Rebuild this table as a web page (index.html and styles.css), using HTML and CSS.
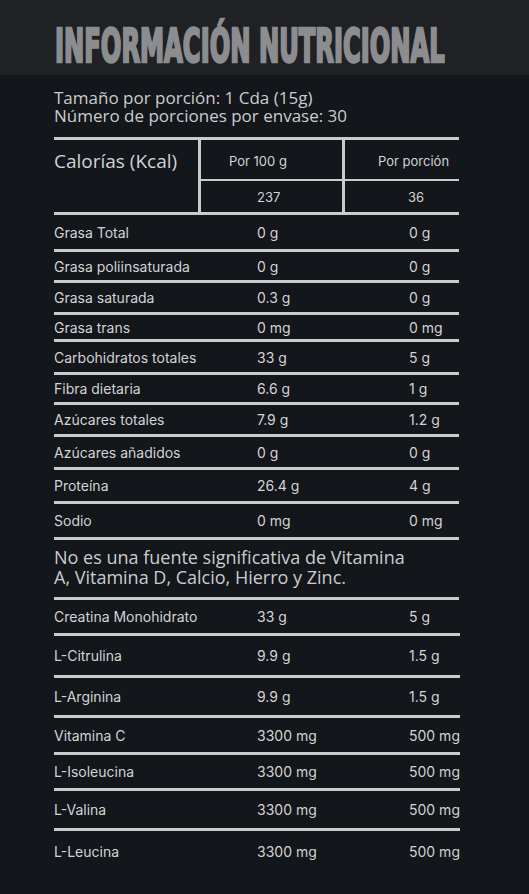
FILE: index.html
```html
<!DOCTYPE html>
<html lang="es">
<head>
    <meta charset="UTF-8">
    <title>Información nutricional</title>
    <meta name="viewport" content="width=device-width, initial-scale=1.0">
    <link rel="stylesheet" href="styles.css">
</head>
<body>
<header class="top">
    <h1 class="title">INFORMACIÓN NUTRICIONAL</h1>
</header>
<main class="panel">
    <p class="serving">Tamaño por porción: 1 Cda (15g)<br>Número de porciones por envase: 30</p>

    <!-- Calorias -->
    <div class="cal">
        <div class="cal-label">Calorías (Kcal)</div>
        <div class="cal-head cal-head-100">Por 100 g</div>
        <div class="cal-head cal-head-por">Por porción</div>
        <div class="cal-val cal-val-100">237</div>
        <div class="cal-val cal-val-por">36</div>
    </div>

    <div class="rows rows-a">
        <div class="row"><span>Grasa Total</span><span>0 g</span><span>0 g</span></div>
        <div class="row"><span>Grasa poliinsaturada</span><span>0 g</span><span>0 g</span></div>
        <div class="row"><span>Grasa saturada</span><span>0.3 g</span><span>0 g</span></div>
        <div class="row"><span>Grasa trans</span><span>0 mg</span><span>0 mg</span></div>
        <div class="row"><span>Carbohidratos totales</span><span>33 g</span><span>5 g</span></div>
        <div class="row"><span>Fibra dietaria</span><span>6.6 g</span><span>1 g</span></div>
        <div class="row"><span>Azúcares totales</span><span>7.9 g</span><span>1.2 g</span></div>
        <div class="row"><span>Azúcares añadidos</span><span>0 g</span><span>0 g</span></div>
        <div class="row"><span>Proteína</span><span>26.4 g</span><span>4 g</span></div>
        <div class="row"><span>Sodio</span><span>0 mg</span><span>0 mg</span></div>
    </div>

    <p class="note">No es una fuente significativa de Vitamina<br>A, Vitamina D, Calcio, Hierro y Zinc.</p>

    <div class="rows rows-b">
        <div class="row"><span>Creatina Monohidrato</span><span>33 g</span><span>5 g</span></div>
        <div class="row"><span>L-Citrulina</span><span>9.9 g</span><span>1.5 g</span></div>
        <div class="row"><span>L-Arginina</span><span>9.9 g</span><span>1.5 g</span></div>
        <div class="row"><span>Vitamina C</span><span>3300 mg</span><span>500 mg</span></div>
        <div class="row"><span>L-Isoleucina</span><span>3300 mg</span><span>500 mg</span></div>
        <div class="row"><span>L-Valina</span><span>3300 mg</span><span>500 mg</span></div>
        <div class="row"><span>L-Leucina</span><span>3300 mg</span><span>500 mg</span></div>
    </div>
</main>
</body>
</html>
```
FILE: styles.css
```css
* {
    box-sizing: border-box;
}
body {
    margin: 0;
    background-color: #13161a;
    color: #d2d3d4;
    font-family: "Inter", "Liberation Sans", sans-serif;
}
.top {
    height: 75px;
    background-color: #1f2125;
    padding: 23px 0 0 55px;
    overflow: hidden;
}
.title {
    margin: 0;
    font-family: "DejaVu Sans Condensed", "DejaVu Sans", sans-serif;
    font-weight: 700;
    font-size: 46px;
    line-height: 46px;
    color: #8c8d8f;
    -webkit-text-stroke: 2.5px #8c8d8f;
    white-space: nowrap;
    transform: scaleX(0.585);
    transform-origin: left top;
}
.panel {
    width: 405px;
    margin-left: 54px;
    padding-top: 14px;
}
.serving {
    margin: 0 0 12px;
    font-family: "Open Sans", sans-serif;
    font-size: 17px;
    line-height: 18px;
    color: #cbcccd;
}
/* Calorias block, the lines are the grid background */
.cal {
    display: grid;
    grid-template-columns: 144px 141px 1fr;
    grid-template-rows: 39px 31px;
    gap: 2px 3px;
    padding: 3px 0;
    background-color: #c9cbcd;
}
.cal > div {
    background-color: #13161a;
    font-size: 13px;
    line-height: 16px;
}
.cal-label {
    grid-row: span 2;
    font-family: "Open Sans", sans-serif;
    font-size: 19px !important;
    line-height: 24px !important;
    padding-top: 9px;
}
.cal-head {
    padding-top: 13px;
}
.cal-head-100 {
    padding-left: 28px;
}
.cal-head-por {
    padding-left: 33px;
}
.cal-val {
    display: flex;
    align-items: center;
}
.cal-val-100 {
    padding-left: 56px;
}
.cal-val-por {
    padding-left: 63px;
}
.rows {
    display: grid;
}
.rows-a {
    grid-template-rows: 37px 31px 32px 27px 33px 30px 32px 33px 34px 36px;
}
.rows-b {
    grid-template-rows: 36px 42px 40px 37px 36px 40px 40px;
}
.row {
    display: grid;
    grid-template-columns: 203px 152px 1fr;
    align-items: center;
    border-bottom: 3px solid #c9cbcd;
    font-size: 14px;
    white-space: nowrap;
}
.rows-b .row:last-child {
    border-bottom: none;
}
.note {
    margin: 0;
    height: 60px;
    padding-top: 7px;
    border-bottom: 3px solid #c9cbcd;
    font-family: "Open Sans", sans-serif;
    font-size: 18px;
    line-height: 20px;
    color: #cbcccd;
}
```
